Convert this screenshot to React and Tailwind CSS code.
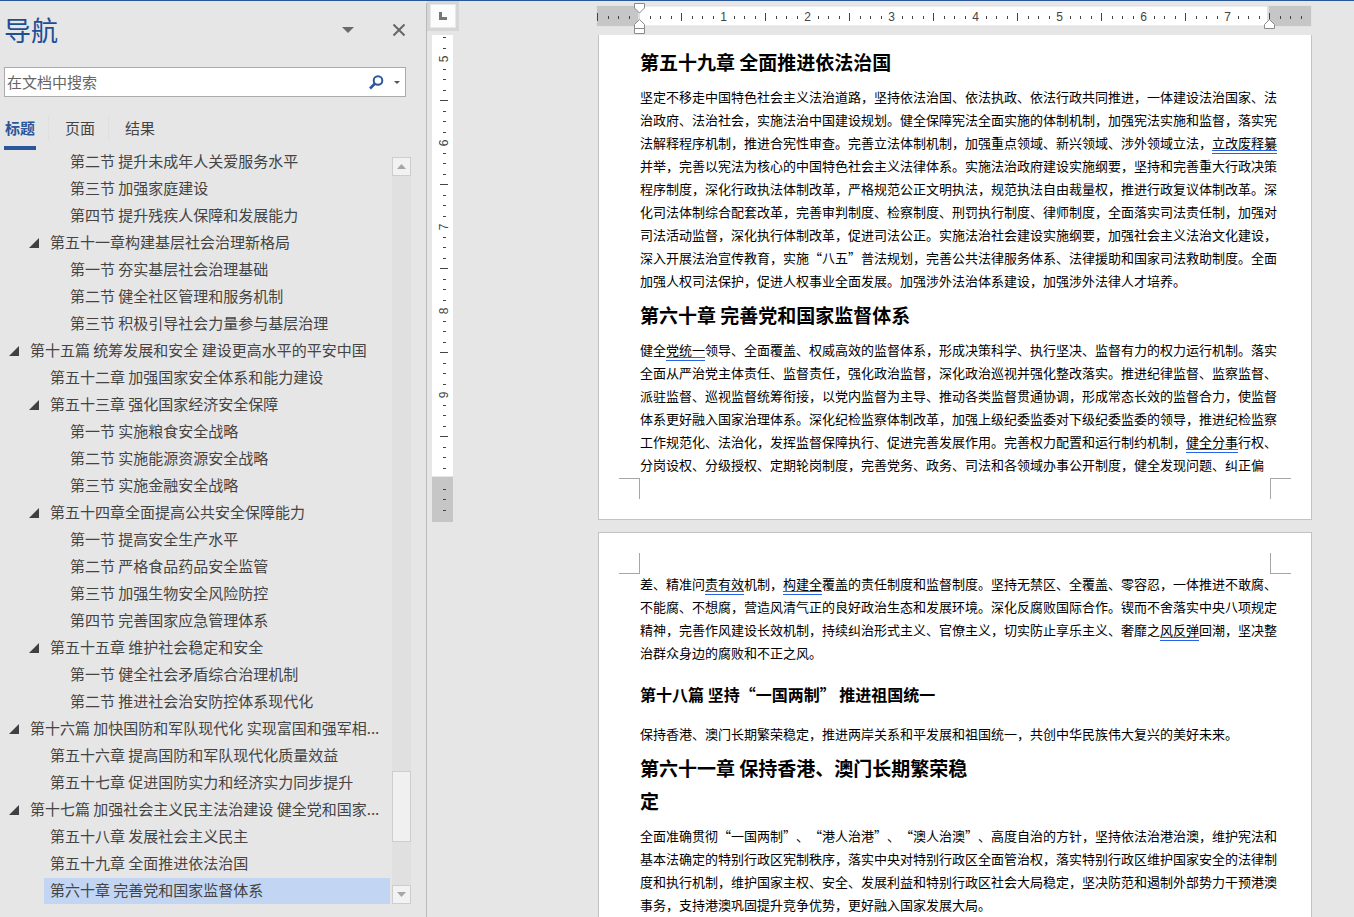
import { Fragment, useState } from "react";

const outline = [
  { level: 3, text: "第二节 提升未成年人关爱服务水平" },
  { level: 3, text: "第三节 加强家庭建设" },
  { level: 3, text: "第四节 提升残疾人保障和发展能力" },
  { level: 2, text: "第五十一章构建基层社会治理新格局", open: true },
  { level: 3, text: "第一节 夯实基层社会治理基础" },
  { level: 3, text: "第二节 健全社区管理和服务机制" },
  { level: 3, text: "第三节 积极引导社会力量参与基层治理" },
  { level: 1, text: "第十五篇 统筹发展和安全 建设更高水平的平安中国", open: true },
  { level: 2, text: "第五十二章 加强国家安全体系和能力建设" },
  { level: 2, text: "第五十三章 强化国家经济安全保障", open: true },
  { level: 3, text: "第一节 实施粮食安全战略" },
  { level: 3, text: "第二节 实施能源资源安全战略" },
  { level: 3, text: "第三节 实施金融安全战略" },
  { level: 2, text: "第五十四章全面提高公共安全保障能力", open: true },
  { level: 3, text: "第一节 提高安全生产水平" },
  { level: 3, text: "第二节 严格食品药品安全监管" },
  { level: 3, text: "第三节 加强生物安全风险防控" },
  { level: 3, text: "第四节 完善国家应急管理体系" },
  { level: 2, text: "第五十五章 维护社会稳定和安全", open: true },
  { level: 3, text: "第一节 健全社会矛盾综合治理机制" },
  { level: 3, text: "第二节 推进社会治安防控体系现代化" },
  { level: 1, text: "第十六篇 加快国防和军队现代化 实现富国和强军相...", open: true },
  { level: 2, text: "第五十六章 提高国防和军队现代化质量效益" },
  { level: 2, text: "第五十七章 促进国防实力和经济实力同步提升" },
  { level: 1, text: "第十七篇 加强社会主义民主法治建设 健全党和国家...", open: true },
  { level: 2, text: "第五十八章 发展社会主义民主" },
  { level: 2, text: "第五十九章 全面推进依法治国" },
  { level: 2, text: "第六十章 完善党和国家监督体系" },
];

const indent = { 1: "pl-2", 2: "pl-7", 3: "pl-12" };

// [[...]] marks a phrase flagged by the grammar checker
const chapter59 = [
  "坚定不移走中国特色社会主义法治道路，坚持依法治国、依法执政、依法行政共同推进，一体建设法治国家、法",
  "治政府、法治社会，实施法治中国建设规划。健全保障宪法全面实施的体制机制，加强宪法实施和监督，落实宪",
  "法解释程序机制，推进合宪性审查。完善立法体制机制，加强重点领域、新兴领域、涉外领域立法，[[立改废释纂]]",
  "并举，完善以宪法为核心的中国特色社会主义法律体系。实施法治政府建设实施纲要，坚持和完善重大行政决策",
  "程序制度，深化行政执法体制改革，严格规范公正文明执法，规范执法自由裁量权，推进行政复议体制改革。深",
  "化司法体制综合配套改革，完善审判制度、检察制度、刑罚执行制度、律师制度，全面落实司法责任制，加强对",
  "司法活动监督，深化执行体制改革，促进司法公正。实施法治社会建设实施纲要，加强社会主义法治文化建设，",
  "深入开展法治宣传教育，实施“八五”普法规划，完善公共法律服务体系、法律援助和国家司法救助制度。全面",
  "加强人权司法保护，促进人权事业全面发展。加强涉外法治体系建设，加强涉外法律人才培养。",
];

const chapter60 = [
  "健全[[党统一]]领导、全面覆盖、权威高效的监督体系，形成决策科学、执行坚决、监督有力的权力运行机制。落实",
  "全面从严治党主体责任、监督责任，强化政治监督，深化政治巡视并强化整改落实。推进纪律监督、监察监督、",
  "派驻监督、巡视监督统筹衔接，以党内监督为主导、推动各类监督贯通协调，形成常态长效的监督合力，使监督",
  "体系更好融入国家治理体系。深化纪检监察体制改革，加强上级纪委监委对下级纪委监委的领导，推进纪检监察",
  "工作规范化、法治化，发挥监督保障执行、促进完善发展作用。完善权力配置和运行制约机制，[[健全分事]]行权、",
  "分岗设权、分级授权、定期轮岗制度，完善党务、政务、司法和各领域办事公开制度，健全发现问题、纠正偏",
];

const chapter60Rest = [
  "差、精准问[[责有效]]机制，[[构建全]]覆盖的责任制度和监督制度。坚持无禁区、全覆盖、零容忍，一体推进不敢腐、",
  "不能腐、不想腐，营造风清气正的良好政治生态和发展环境。深化反腐败国际合作。锲而不舍落实中央八项规定",
  "精神，完善作风建设长效机制，持续纠治形式主义、官僚主义，切实防止享乐主义、奢靡之[[风反弹]]回潮，坚决整",
  "治群众身边的腐败和不正之风。",
];

const part18 = [
  "保持香港、澳门长期繁荣稳定，推进两岸关系和平发展和祖国统一，共创中华民族伟大复兴的美好未来。",
];

const chapter61 = [
  "全面准确贯彻“一国两制”、“港人治港”、“澳人治澳”、高度自治的方针，坚持依法治港治澳，维护宪法和",
  "基本法确定的特别行政区宪制秩序，落实中央对特别行政区全面管治权，落实特别行政区维护国家安全的法律制",
  "度和执行机制，维护国家主权、安全、发展利益和特别行政区社会大局稳定，坚决防范和遏制外部势力干预港澳",
  "事务，支持港澳巩固提升竞争优势，更好融入国家发展大局。",
];

function Paragraph({ lines }) {
  return (
    <p className="text-[13px] leading-[23px] whitespace-nowrap">
      {lines.map((line) => (
        <span key={line} className="block">
          {line.split(/\[\[|\]\]/).map((part, i) =>
            i % 2 ? (
              <span key={i} className="inline-block leading-[15px] border-b-4 border-double border-[#2563eb]">
                {part}
              </span>
            ) : (
              part
            )
          )}
        </span>
      ))}
    </p>
  );
}

function Chapter({ children }) {
  return <h2 className="mt-[6px] mb-[7px] text-[19px] leading-[33px] font-bold">{children}</h2>;
}

function CropMarks({ edge }) {
  const side = edge === "top" ? "border-b" : "border-t";
  return (
    <div className={`-mx-[21px] flex justify-between ${edge === "top" ? "-mb-[2px]" : "mt-[2px]"}`}>
      <div className={`size-[21px] border-r border-[#a6a6a6] ${side}`} />
      <div className={`size-[21px] border-l border-[#a6a6a6] ${side}`} />
    </div>
  );
}

function HorizontalRuler() {
  const ticks = [];
  for (let i = -4; i <= 63; i++) {
    if (i <= 0 ? i === 0 : i % 8 === 0) continue;
    const x = Math.floor(49.5 + i * 10.5);
    const long = Math.abs(i) % 4 === 0;
    ticks.push(<rect key={i} x={x} y={long ? 12 : 15} width="1" height={long ? 8 : 3} fill="#444" />);
  }
  return (
    <svg className="ml-[131px] block h-[34px] w-[730px] shrink-0" viewBox="0 0 730 34">
      <rect x="7" y="5" width="714" height="20" fill="#fff" stroke="#dedede" />
      <rect x="7" y="5" width="41" height="20" fill="#c6c6c6" />
      <rect x="48" y="5" width="2" height="20" fill="#e0e0e0" />
      <rect x="677" y="5" width="2" height="20" fill="#e0e0e0" />
      <rect x="679" y="5" width="42" height="20" fill="#c6c6c6" />
      {ticks}
      {[1, 2, 3, 4, 5, 6, 7].map((n) => (
        <text key={n} x={49.5 + n * 84} y="20" textAnchor="middle" fontSize="12" fill="#444" fontFamily="Liberation Sans, sans-serif">
          {n}
        </text>
      ))}
      <g fill="#fff" stroke="#8a8a8a">
        <path d="M44.5 2.5h10v4.500l-5 5l-5-5z" />
        <path d="M49.500 18.500l5 5v4h-10v-4z" />
        <path d="M44.500 27.500h10v5h-10z" />
        <path d="M679.500 18.500l5 5v4h-10v-4z" />
      </g>
    </svg>
  );
}

function VerticalRuler() {
  const ticks = [];
  for (let i = -2; i <= 43; i++) {
    if (i % 8 === 0) continue;
    const y = Math.floor(23.5 + i * 10.5);
    const long = Math.abs(i) % 8 === 4;
    ticks.push(<rect key={i} x={long ? 8 : 11} y={y} width={long ? 8 : 3} height="1" fill="#444" />);
  }
  return (
    <svg className="mt-[4px] ml-[5px] block h-[488px] w-[21px]" viewBox="0 0 21 488">
      <rect width="21" height="441" fill="#fff" />
      <rect y="442" width="21" height="45" fill="#c6c6c6" />
      {ticks}
      {[5, 6, 7, 8, 9].map((n, i) => (
        <text
          key={n}
          transform={`translate(16 ${24 + i * 84}) rotate(-90)`}
          textAnchor="middle"
          fontSize="12"
          fill="#444"
          fontFamily="Liberation Sans, sans-serif"
        >
          {n}
        </text>
      ))}
    </svg>
  );
}

function Navigation() {
  const [tab, setTab] = useState("标题");
  const [current, setCurrent] = useState(outline.length - 1);

  return (
    <aside className="mt-[2px] w-[427px] shrink-0 border-r border-[#b9b9b9] text-[15px] text-[#444]">
      <div className="flex h-[64px] items-center pb-[10px] pl-1">
        <h1 className="flex-1 text-[27px] leading-8 text-[#1e4e94]">导航</h1>
        <button aria-label="任务窗格选项" className="mr-[38px]">
          <svg width="12" height="6" viewBox="0 0 12 6">
            <path d="M0 0h12L6 6z" fill="#6a6a6a" />
          </svg>
        </button>
        <button aria-label="关闭" className="mr-5">
          <svg width="14" height="14" viewBox="0 0 14 14" stroke="#666" strokeWidth="2">
            <path d="M1.500 1.500l11 11M12.500 1.500l-11 11" />
          </svg>
        </button>
      </div>

      <div className="mr-5 ml-1 flex h-[30px] items-center border border-[#ababab] bg-white">
        <input
          type="text"
          aria-label="在文档中搜索"
          placeholder="在文档中搜索"
          className="min-w-0 flex-1 pl-0.5 leading-6 outline-none placeholder:text-[#666]"
        />
        <button aria-label="搜索" className="mr-[10px]">
          <svg width="15" height="15" viewBox="0 0 15 15" fill="none" stroke="#2b579a">
            <circle cx="9" cy="5.500" r="4.300" strokeWidth="2" />
            <path d="M6 8.500l-5 5" strokeWidth="2.600" />
          </svg>
        </button>
        <button aria-label="搜索选项" className="mr-[5px]">
          <svg width="6" height="3" viewBox="0 0 6 3">
            <path d="M0 0h6L3 3z" fill="#555" />
          </svg>
        </button>
      </div>

      <div role="tablist" className="mt-[18px] ml-1 flex h-[35px]">
        {["标题", "页面", "结果"].map((name, i) => (
          <Fragment key={name}>
            {i > 0 && <span className="mr-[15px] ml-3 h-[26px] w-px bg-[#dfdfdf]" />}
            <button
              role="tab"
              aria-selected={tab === name}
              onClick={() => setTab(name)}
              className={
                tab === name
                  ? "w-8 border-b-4 border-[#2b579a] pb-1 font-bold text-[#2b579a]"
                  : "w-8 border-b-4 border-transparent pb-1"
              }
            >
              {name}
            </button>
          </Fragment>
        ))}
      </div>

      <div className="-mt-[2px] flex">
        <ul className="w-[390px]">
          {outline.map((item, i) => (
            <li key={item.text} className={`flex h-[27px] items-center ${indent[item.level]}`}>
              <span className="w-4">
                {item.open && (
                  <button aria-label="折叠" className="block pl-px">
                    <svg width="10" height="10" viewBox="0 0 10 10">
                      <path d="M10 0v10H0z" fill="#404040" />
                    </svg>
                  </button>
                )}
              </span>
              <a
                href={`#h${i}`}
                onClick={() => setCurrent(i)}
                className={`flex-1 whitespace-nowrap pb-0.5 pl-[6px] leading-6 ${current === i ? "bg-[#c2d5f2]" : ""}`}
              >
                {item.text}
              </a>
            </li>
          ))}
        </ul>

        <div className="mt-[9px] ml-[2px] flex w-[19px] flex-col bg-[#e0e0e0]">
          <button aria-label="向上滚动" className="flex h-[19px] items-center justify-center border border-[#cdcdcd] bg-[#f2f2f2]">
            <svg width="9" height="5" viewBox="0 0 9 5">
              <path d="M4.500 0L9 5H0z" fill="#a6a6a6" />
            </svg>
          </button>
          <div className="flex-1" />
          <div className="h-[71px] border border-[#cdcdcd] bg-[#f0f0f0]" />
          <div className="h-[43px]" />
          <button aria-label="向下滚动" className="flex h-[19px] items-center justify-center border border-[#cdcdcd] bg-[#f2f2f2]">
            <svg width="9" height="5" viewBox="0 0 9 5">
              <path d="M0 0h9L4.500 5z" fill="#a6a6a6" />
            </svg>
          </button>
        </div>
      </div>
    </aside>
  );
}

export default function App() {
  return (
    <div className="flex h-screen overflow-hidden border-t border-[#2b579a] bg-[#e6e6e6] font-['Noto_Sans_CJK_SC',sans-serif] [text-spacing-trim:space-all]">
      <Navigation />

      <div className="w-8 shrink-0">
        <div className="h-[30px] bg-[#d6d6d6] p-[3px]">
          <button aria-label="制表符" className="flex h-6 w-[26px] items-center justify-center border border-[#e8e8e8] bg-[#fcfcfc]">
            <svg width="8" height="8" viewBox="0 0 8 8">
              <path d="M0 0h3v5h5v3H0z" fill="#777" />
            </svg>
          </button>
        </div>
        <VerticalRuler />
      </div>

      <main className="min-w-0 flex-1 overflow-hidden text-black">
        <HorizontalRuler />
        <div className="ml-[139px] w-[714px]">
          <section className="border border-t-0 border-[#c3c3c3] bg-white px-[41px] pt-1 pb-5">
            <Chapter>第五十九章 全面推进依法治国</Chapter>
            <Paragraph lines={chapter59} />
            <Chapter>第六十章 完善党和国家监督体系</Chapter>
            <Paragraph lines={chapter60} />
            <CropMarks edge="bottom" />
          </section>

          <section className="mt-3 border border-[#c3c3c3] bg-white px-[41px] pt-5 pb-5">
            <CropMarks edge="top" />
            <Paragraph lines={chapter60Rest} />
            <h1 className="mt-[14px] mb-3 text-base leading-8 font-bold">第十八篇 坚持“一国两制” 推进祖国统一</h1>
            <Paragraph lines={part18} />
            <Chapter>
              第六十一章 保持香港、澳门长期繁荣稳
              <br />定
            </Chapter>
            <Paragraph lines={chapter61} />
          </section>
        </div>
      </main>
    </div>
  );
}
